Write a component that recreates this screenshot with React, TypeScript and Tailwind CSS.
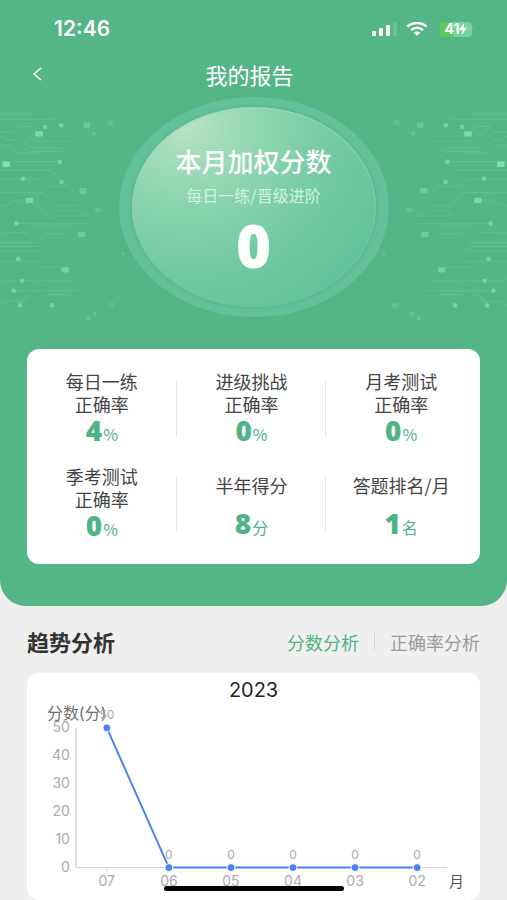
import { useState } from "react";

type Stat = {
  label: string[];
  value: number;
  unit: string;
};

const stats: Stat[] = [
  { label: ["每日一练", "正确率"], value: 4, unit: "%" },
  { label: ["进级挑战", "正确率"], value: 0, unit: "%" },
  { label: ["月考测试", "正确率"], value: 0, unit: "%" },
  { label: ["季考测试", "正确率"], value: 0, unit: "%" },
  { label: ["半年得分"], value: 8, unit: "分" },
  { label: ["答题排名/月"], value: 1, unit: "名" },
];

const scores = [
  { month: "07", score: 50 },
  { month: "06", score: 0 },
  { month: "05", score: 0 },
  { month: "04", score: 0 },
  { month: "03", score: 0 },
  { month: "02", score: 0 },
];

const StatusBar = () => (
  <div className="flex h-[52px] items-center justify-between pl-[54px] pr-8 pt-1.5">
    <span className="font-['Inter',sans-serif] text-[21px] font-semibold leading-7">
      12:46
    </span>
    <div className="flex items-center gap-2">
      <svg width="26" height="14" viewBox="0 0 26 14" fill="#fff">
        <rect x="0" y="9" width="4" height="5" rx="1" />
        <rect x="7" y="6" width="4" height="8" rx="1" />
        <rect x="14" y="3" width="4" height="11" rx="1" />
        <rect x="21" y="0" width="4" height="14" rx="1" opacity=".15" />
      </svg>
      <svg width="22" height="14" viewBox="0 0 22 14" fill="none">
        <path d="M1.5 4.6C7 -.2 15 -.2 20.500 4.600" stroke="#fff" strokeWidth="2.600" />
        <path d="M5 8.100C8.500 5 13.500 5 17 8.100" stroke="#fff" strokeWidth="2.500" />
        <path d="M11 13.800L7.600 10.800C9.500 9.200 12.500 9.200 14.400 10.800Z" fill="#fff" />
      </svg>
      <div className="ml-1 flex items-center">
        <div className="flex h-[15px] w-8 items-center justify-center rounded-[4px] bg-linear-to-r from-[#63c75e] from-40% to-[#74d3aa] to-40% font-['Inter',sans-serif] text-sm font-bold">
          41
          <svg width="8" height="12" viewBox="0 0 8 12" fill="#fff">
            <path d="M5 0L0 7h3.400L2.500 12L8 4.800H4.600Z" />
          </svg>
        </div>
        <span className="ml-px h-1 w-[2px] rounded-r bg-[#74d3aa]/50"></span>
      </div>
    </div>
  </div>
);

// decorative circuit lines, flipped for the right hand side
const Circuit = ({ className }: { className: string }) => (
  <svg
    className={`absolute top-[90px] h-[250px] w-[133px] ${className}`}
    viewBox="0 0 400 750"
    fill="none"
    aria-hidden="true"
  >
    <g stroke="#7fd3a6" strokeWidth="3" opacity=".34">
      <path d="M0 72H108M0 87H165M48 109H96L118 131M52 110L104 153H218" />
      <path d="M0 126H38L92 174H190L232 218M0 138L20 150H48L84 184H180L215 210" />
      <path d="M0 165H22L50 188H130M0 214H180M0 241H155L222 306M0 267H118L142 290H208" />
      <path d="M0 308H130L168 346H235M0 346H22L42 330H86L158 388M158 385L182 360H228" />
      <path d="M170 378H275M48 400H265M100 408H210M0 428L10 434L20 428H84" />
      <path d="M0 459H105L138 432H202M0 470H118L130 480M0 484H125M0 514H130" />
      <path d="M104 532H190M0 560L12 573H220M40 603H240M60 647L102 603M0 646L20 634H66L90 612" />
      <path d="M108 578L122 588L136 578M130 615H210" />
    </g>
    <g fill="#84dbb3">
      <rect x="106" y="123" width="23" height="16" rx="3" opacity=".9" />
      <rect x="7" y="214" width="23" height="17" rx="3" />
      <rect x="77" y="323" width="22" height="16" rx="3" opacity=".85" />
      <rect x="239" y="294" width="22" height="16" rx="3" opacity=".5" />
      <rect x="235" y="425" width="22" height="16" rx="3" opacity=".6" />
      <rect x="185" y="532" width="22" height="16" rx="3" opacity=".7" />
      <rect x="251" y="97" width="20" height="16" rx="3" opacity=".45" />
      <rect x="323" y="90" width="18" height="14" rx="3" opacity=".25" />
      <rect x="284" y="352" width="19" height="14" rx="3" opacity=".3" />
      <rect x="325" y="639" width="21" height="14" rx="3" opacity=".28" />
    </g>
    <g fill="#84dbb3" opacity=".75">
      <circle cx="135" cy="110" r="7" />
      <circle cx="184" cy="105" r="7" />
      <circle cx="180" cy="215" r="7" />
      <circle cx="69" cy="266" r="7" />
      <circle cx="185" cy="276" r="7" />
      <circle cx="49" cy="400" r="7" />
      <circle cx="55" cy="507" r="7" />
      <circle cx="67" cy="573" r="7" />
      <circle cx="41" cy="603" r="7" />
      <circle cx="60" cy="647" r="7" />
      <circle cx="156" cy="647" r="7" />
    </g>
    <g fill="#84dbb3" opacity=".35">
      <circle cx="282" cy="130" r="6" />
      <circle cx="285" cy="672" r="6" />
      <circle cx="266" cy="686" r="6" />
      <circle cx="370" cy="491" r="5" />
      <circle cx="367" cy="376" r="5" />
    </g>
  </svg>
);

const StatCell = ({ stat, last }: { stat: Stat; last: boolean }) => (
  <div
    className={`relative flex h-[95px] flex-col items-center justify-center text-center ${
      stat.label.length === 1 ? "gap-3 pt-2" : ""
    }`}
  >
    <p className="text-lg leading-[23px] text-[#444]">
      {stat.label.map((line) => (
        <span key={line} className="block">
          {line}
        </span>
      ))}
    </p>
    <p className="flex items-baseline gap-px text-[#4fb386]">
      <span className="font-['Open_Sans',sans-serif] text-[28px] font-extrabold leading-7">
        {stat.value}
      </span>
      <span className="text-base leading-7">{stat.unit}</span>
    </p>
    {!last && (
      <span className="absolute right-0 top-5 h-14 w-px bg-[#e9e9e9]"></span>
    )}
  </div>
);

const ScoreChart = () => {
  const x = (i: number) => 80 + (i * 311) / 5;
  const y = (score: number) => 195 - (score / 50) * 140;
  const line = scores.map((s, i) => `${x(i)},${y(s.score)}`).join(" ");

  return (
    <svg
      className="block w-full font-['Inter','Noto_Sans_CJK_SC',sans-serif]"
      viewBox="0 0 454 227"
      role="img"
      aria-label="2023 分数分析"
    >
      <text x="227" y="24" fontSize="20" textAnchor="middle" fill="#222">
        2023
      </text>
      <text x="20" y="46" fontSize="16" fill="#707070">
        分数(分)
      </text>
      <path d="M49 55V195" stroke="#dcdcdc" strokeWidth="2" />
      <path d="M49 195H421M80 195V199" stroke="#d5d5d5" strokeWidth="1" />

      <g fontSize="14" fill="#aaa">
        {[0, 10, 20, 30, 40, 50].map((tick) => (
          <text key={tick} x="43" y={y(tick) + 4} textAnchor="end">
            {tick}
          </text>
        ))}
        {scores.map((s, i) => (
          <text key={s.month} x={x(i)} y="213" textAnchor="middle">
            {s.month}
          </text>
        ))}
      </g>
      <text x="423" y="214" fontSize="15" fill="#555">
        月
      </text>

      <polyline points={line} fill="none" stroke="#4a83f0" strokeWidth="2" />
      {scores.map((s, i) => (
        <g key={s.month}>
          <circle
            cx={x(i)}
            cy={y(s.score)}
            r="4"
            fill="#4a83f0"
            stroke="#fff"
            strokeWidth="1"
          />
          <text
            x={x(i)}
            y={y(s.score) - 9}
            fontSize="12"
            textAnchor="middle"
            fill="#aaa"
          >
            {s.score}
          </text>
        </g>
      ))}
    </svg>
  );
};

const App = () => {
  const [tab, setTab] = useState<string>("score");

  return (
    <main className="flex min-h-screen flex-col bg-[#efefef] font-['Noto_Sans_CJK_SC',sans-serif]">
      <div className="relative rounded-b-[26px] bg-[#54b587] pb-[42px] text-white">
        <Circuit className="left-0" />
        <Circuit className="right-0 -scale-x-100" />

        <StatusBar />

        <header className="grid h-[45px] grid-cols-3 items-center pb-0.5 pl-[30px] pr-[38px]">
          <button type="button" aria-label="返回" className="cursor-pointer">
            <svg width="14" height="14" viewBox="0 0 14 14" fill="none">
              <path d="M11 1L4 7L11 13" stroke="#fff" strokeWidth="1.500" />
            </svg>
          </button>
          <h1 className="whitespace-nowrap text-center text-[22px] leading-8">
            我的报告
          </h1>
        </header>

        <section className="relative mx-auto h-[220px] w-[270px] rounded-[50%] bg-[#64c19b] px-[13px] py-[10px]">
          <div className="flex h-full flex-col items-center rounded-[50%] bg-[radial-gradient(ellipse_at_22%_8%,#b9e4c5_0%,#8fd5b1_28%,#70c9a2_58%,#5bbf98_100%)] pt-[38px] shadow-[0_0_4px_#4aae83,inset_0_1px_2px_#96dab8]">
            <h2 className="text-[26px] font-medium leading-8">本月加权分数</h2>
            <p className="mt-1.5 text-base leading-6 text-[#d3f3e2]">
              每日一练/晋级进阶
            </p>
            <p className="mt-2 font-['Open_Sans',sans-serif] text-[60px] font-extrabold leading-[60px]">
              0
            </p>
          </div>
        </section>

        <section className="relative mx-[27px] mt-8 grid grid-cols-3 rounded-xl bg-white pb-[13px] pr-1 pt-3">
          {stats.map((stat, i) => (
            <StatCell key={i} stat={stat} last={i % 3 === 2} />
          ))}
        </section>
      </div>

      <section className="flex flex-1 flex-col px-[27px]">
        <div className="flex h-[67px] items-center justify-between pt-1">
          <h2 className="text-[22px] font-bold text-[#333]">趋势分析</h2>
          <div className="flex items-center gap-[15px] text-lg">
            <button
              type="button"
              onClick={() => setTab("score")}
              className={`cursor-pointer ${
                tab === "score" ? "text-[#4fb386]" : "text-[#9b9b9b]"
              }`}
            >
              分数分析
            </button>
            <span className="h-[18px] w-px bg-[#d5d5d5]"></span>
            <button
              type="button"
              onClick={() => setTab("rate")}
              className={`cursor-pointer ${
                tab === "rate" ? "text-[#4fb386]" : "text-[#9b9b9b]"
              }`}
            >
              正确率分析
            </button>
          </div>
        </div>
        <div className="flex-1 rounded-xl bg-white">
          <ScoreChart />
        </div>
      </section>

      <div className="fixed bottom-[9px] left-1/2 h-[5px] w-[180px] -translate-x-1/2 rounded-full bg-black"></div>
    </main>
  );
};

export default App;
